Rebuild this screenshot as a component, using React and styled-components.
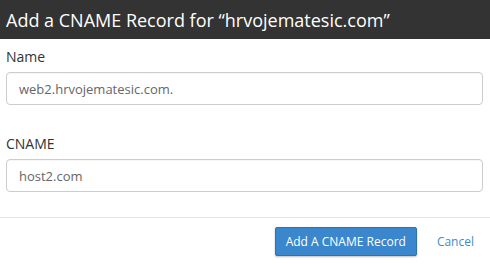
import React from "react";
import styled, { createGlobalStyle } from "styled-components";

const Global = createGlobalStyle`
  html, body { margin: 0; padding: 0; background: #fff; }
  body { font-family: "Open Sans", "Liberation Sans", sans-serif; color: #333; }
  * { box-sizing: border-box; }
`;

const Dialog = styled.div`
  width: 490px;
  height: 264px;
  display: flex;
  flex-direction: column;
  background: #fff;
`;

const Header = styled.div`
  height: 39px;
  background: #333333;
  color: #fff;
  display: flex;
  align-items: center;
  padding: 0 6px;
  font-size: 18px;
`;

const Body = styled.div`
  padding: 8px 7px 0 6px;
  display: flex;
  flex-direction: column;
`;

const Field = styled.div`
  display: flex;
  flex-direction: column;
  margin-bottom: ${(p) => p.$mb || 0}px;
`;

const Label = styled.label`
  font-size: 14px;
  line-height: 20px;
  color: #333;
  margin-bottom: 5px;
`;

const Input = styled.input`
  height: 33px;
  width: 100%;
  border: 1px solid #cccccc;
  border-radius: 4px;
  padding: 0 12px;
  font-family: "Open Sans", "Liberation Sans", sans-serif;
  font-size: 13px;
  color: #666;
  outline: none;
  box-shadow: inset 0 1px 1px rgba(0, 0, 0, 0.04);
`;

const Footer = styled.div`
  margin-top: 25px;
  border-top: 1px solid #e5e5e5;
  padding: 9px 18px 0 0;
  display: flex;
  justify-content: flex-end;
  align-items: center;
  gap: 20px;
`;

const PrimaryButton = styled.button`
  height: 29px;
  padding: 0 10px;
  background: #3a87cd;
  border: 1px solid #2f72b0;
  border-radius: 2px;
  color: #fff;
  font-family: "Open Sans", "Liberation Sans", sans-serif;
  font-size: 12px;
  box-shadow: 0 1px 2px rgba(0, 0, 0, 0.25);
`;

const LinkButton = styled.a`
  color: #428bca;
  font-size: 12px;
  text-decoration: none;
  margin-right: -2px;
`;

export default function App() {
  return (
    <>
      <Global />
      <Dialog>
        <Header>Add a CNAME Record for “hrvojematesic.com”</Header>
        <Body>
          <Field $mb={29}>
            <Label>Name</Label>
            <Input defaultValue="web2.hrvojematesic.com." />
          </Field>
          <Field>
            <Label>CNAME</Label>
            <Input defaultValue="host2.com" />
          </Field>
        </Body>
        <Footer>
          <PrimaryButton>Add A CNAME Record</PrimaryButton>
          <LinkButton href="#">Cancel</LinkButton>
        </Footer>
      </Dialog>
    </>
  );
}
